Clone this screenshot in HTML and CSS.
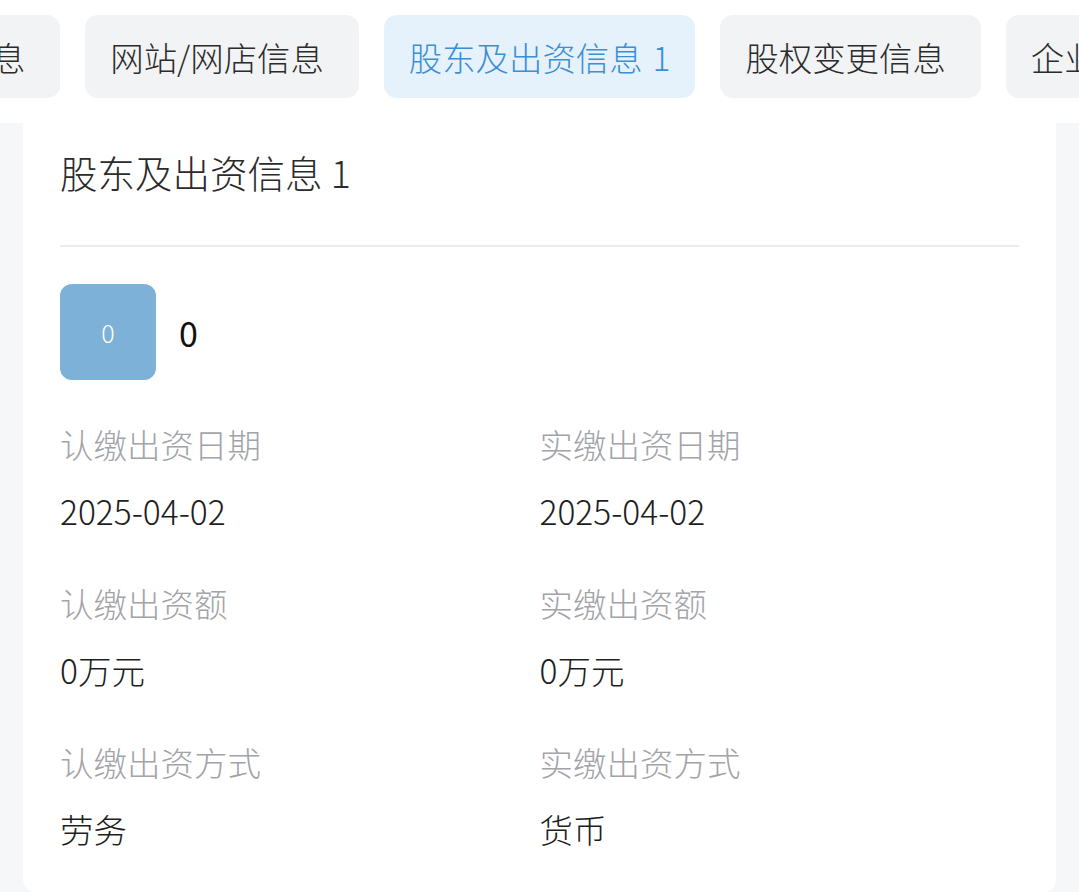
FILE: index.html
```html
<!DOCTYPE html>
<html lang="zh-CN">
<head>
<meta charset="utf-8">
<title>股东及出资信息</title>
<link rel="stylesheet" href="styles.css">
</head>
<body>
<div class="page">
  <nav class="tabs" id="tabs">
    <div class="tab">分支机构信息<span class="count"></span></div>
    <div class="tab" id="tab-site">网站/网店信息<span class="count"></span></div>
    <div class="tab active">股东及出资信息<span class="count">1</span></div>
    <div class="tab">股权变更信息<span class="count"></span></div>
    <div class="tab">企业年报信息<span class="count"></span></div>
  </nav>
  <main class="content">
    <section class="card">
      <h2 class="card-title">股东及出资信息 1</h2>
      <div class="divider"></div>
      <div class="holder">
        <div class="avatar">0</div>
        <div class="holder-name">0</div>
      </div>
      <dl class="fields">
        <div class="field"><dt>认缴出资日期</dt><dd>2025-04-02</dd></div>
        <div class="field"><dt>实缴出资日期</dt><dd>2025-04-02</dd></div>
        <div class="field"><dt>认缴出资额</dt><dd>0万元</dd></div>
        <div class="field"><dt>实缴出资额</dt><dd>0万元</dd></div>
        <div class="field"><dt>认缴出资方式</dt><dd>劳务</dd></div>
        <div class="field"><dt>实缴出资方式</dt><dd>货币</dd></div>
      </dl>
    </section>
  </main>
</div>
<script src="script.js"></script>
</body>
</html>
```

FILE: styles.css
```css
* { box-sizing: border-box; }
html, body {
  margin: 0;
  padding: 0;
  height: 100%;
  overflow: hidden;
}
body {
  font-family: "Noto Sans CJK SC", "Noto Sans", sans-serif;
  font-weight: 300;
  background: #f6f7f9;
  color: #222;
}
.page {
  display: flex;
  flex-direction: column;
  height: 100%;
}
.tabs {
  display: flex;
  gap: 25px;
  padding: 15px 0 25px 0;
  background: #ffffff;
  overflow: hidden;
  white-space: nowrap;
  flex: none;
}
.tab {
  flex: none;
  height: 83px;
  display: flex;
  align-items: center;
  padding: 0 25px;
  background: #f2f3f5;
  border-radius: 13px;
  font-size: 33.4px;
  color: #2b2b2b;
  line-height: 1;
}
.tab .count {
  display: inline-block;
  margin-left: 10px;
}
.tab.active {
  background: #e5f2fc;
  color: #3b8fd2;
}
.content {
  flex: 1;
  padding: 0 23px 0 23px;
}
.card {
  background: #ffffff;
  border-radius: 0 0 14px 14px;
  padding: 24px 37px 40px 37px;
}
.card-title {
  margin: 0;
  font-size: 37.5px;
  font-weight: 300;
  line-height: 50px;
  color: #2b2b2b;
}
.divider {
  height: 2px;
  background: #ececec;
  margin-top: 48px;
}
.holder {
  display: flex;
  align-items: center;
  gap: 23px;
  margin-top: 37px;
}
.avatar {
  width: 96px;
  height: 96px;
  border-radius: 12px;
  background: #7eb1d7;
  color: #ffffff;
  font-size: 25px;
  display: flex;
  align-items: center;
  justify-content: center;
}
.holder-name {
  font-size: 34px;
  color: #111;
  font-weight: 400;
}
.fields {
  display: grid;
  grid-template-columns: 1fr 1fr;
  column-gap: 0;
  row-gap: 44px;
  margin: 40px 0 0 0;
}
.field dt {
  font-size: 33.5px;
  line-height: 48px;
  color: #a2a4a8;
}
.field dd {
  margin: 19px 0 0 0;
  font-size: 33.5px;
  line-height: 48px;
  color: #1e1e1e;
}
```

FILE: script.js
```js
(function () {
  var tabs = document.getElementById('tabs');
  var site = document.getElementById('tab-site');
  if (tabs && site) {
    tabs.scrollLeft = site.offsetLeft - 85;
  }
})();
```
